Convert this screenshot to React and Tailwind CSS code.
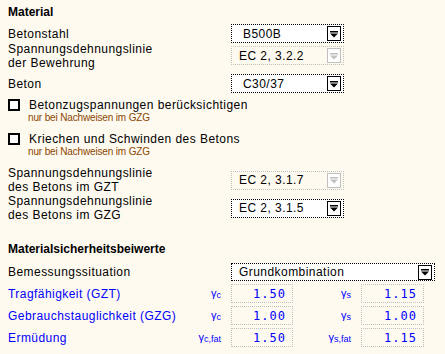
import React from 'react';

function Arrow({ disabled }) {
  return (
    <div
      className={
        disabled
          ? 'mr-[2px] flex h-[15px] w-[14px] items-center justify-center border border-[#c0c0c0] bg-white'
          : 'mr-[2px] flex h-[15px] w-[14px] items-center justify-center border border-black bg-white'
      }
    >
      <svg width="12" height="12" viewBox="0 0 12 12">
        <rect x="2" y="3" width="8" height="1.5" fill={disabled ? '#c0c0c0' : '#000'} />
        <polygon points="2,5.5 10,5.5 6,9.5" fill={disabled ? '#c0c0c0' : '#000'} />
      </svg>
    </div>
  );
}

function Select({ value, disabled, wide, pad }) {
  const base = 'flex items-center justify-between border border-dotted';
  const size = wide ? ' w-[204px] h-[18px]' : ' w-[113px] h-[19px]';
  const tone = disabled ? ' border-[#c0c0c0] bg-transparent' : ' border-black bg-white';
  return (
    <div className={base + size + tone}>
      <span className={pad ? 'pl-[11px] leading-[14px] text-black' : 'pl-[7px] leading-[14px] text-black'}>{value}</span>
      <Arrow disabled={disabled} />
    </div>
  );
}

function Gamma({ sub }) {
  return (
    <span className="text-[#0000ff] text-[11px] leading-[14px] tracking-normal">
      γ<span className="relative top-[1px] text-[9px]">{sub}</span>
    </span>
  );
}

function Num({ v, w }) {
  return (
    <div
      className={
        (w === 63 ? 'w-[63px]' : 'w-[62px]') +
        ' flex h-[19px] items-center justify-end border border-dotted border-[#c0c0c0] pr-[6px] font-["DejaVu_Sans_Mono",monospace] text-[12px] tracking-[1px] text-[#0000ff]'
      }
    >
      {v}
    </div>
  );
}

function DataRow({ label, g1, v1, g2, v2 }) {
  return (
    <div className="flex h-[19px] items-center">
      <div className="w-[180px] leading-[14px] text-[#0000ff]">{label}</div>
      <div className="w-[33px] text-right leading-[14px]">
        <Gamma sub={g1} />
      </div>
      <div className="ml-[10px]">
        <Num v={v1} w={62} />
      </div>
      <div className="w-[58px] text-right leading-[14px]">
        <Gamma sub={g2} />
      </div>
      <div className="ml-[10px]">
        <Num v={v2} w={63} />
      </div>
    </div>
  );
}

export default function App() {
  return (
    <div className="h-[354px] w-[445px] overflow-hidden bg-[#fffaf0] pl-[8px] font-['Liberation_Sans',sans-serif] text-[12px] tracking-[0.45px] text-black">
      <div className="pt-[5px] font-bold leading-[14px] tracking-normal">Material</div>

      <div className="mt-[5px] flex h-[19px] items-center">
        <div className="w-[223px] leading-[14px]">Betonstahl</div>
        <Select value="B500B" pad />
      </div>

      <div className="mt-[3px] flex h-[19px] items-center">
        <div className="w-[223px] leading-[14px]">
          Spannungsdehnungslinie
          <br />
          der Bewehrung
        </div>
        <Select value="EC 2, 3.2.2" disabled />
      </div>

      <div className="mt-[9px] flex h-[19px] items-center">
        <div className="w-[223px] leading-[14px]">Beton</div>
        <Select value="C30/37" pad />
      </div>

      <div className="mt-[5px]">
        <div className="flex h-[14px] items-center">
          <div className="h-[12px] w-[12px] border-2 border-black bg-white" />
          <div className="ml-[9px] leading-[14px]">Betonzugspannungen berücksichtigen</div>
        </div>
        <div className="pl-[20px] text-[10px] leading-[12px] tracking-[-0.15px] text-[#8a4600]">nur bei Nachweisen im GZG</div>
      </div>

      <div className="mt-[8px]">
        <div className="flex h-[14px] items-center">
          <div className="h-[12px] w-[12px] border-2 border-black bg-white" />
          <div className="ml-[9px] leading-[14px]">Kriechen und Schwinden des Betons</div>
        </div>
        <div className="pl-[20px] text-[10px] leading-[12px] tracking-[-0.15px] text-[#8a4600]">nur bei Nachweisen im GZG</div>
      </div>

      <div className="mt-[8px] flex h-[28px] items-center">
        <div className="w-[223px] leading-[14px]">
          Spannungsdehnungslinie
          <br />
          des Betons im GZT
        </div>
        <Select value="EC 2, 3.1.7" disabled />
      </div>

      <div className="flex h-[28px] items-center">
        <div className="w-[223px] leading-[14px]">
          Spannungsdehnungslinie
          <br />
          des Betons im GZG
        </div>
        <Select value="EC 2, 3.1.5" />
      </div>

      <div className="mt-[20px] font-bold leading-[14px] tracking-normal">Materialsicherheitsbeiwerte</div>

      <div className="mt-[7px] flex h-[18px] items-center">
        <div className="w-[223px] leading-[14px]">Bemessungssituation</div>
        <Select value="Grundkombination" wide />
      </div>

      <div className="mt-[3px] flex flex-col gap-[3px]">
        <DataRow label="Tragfähigkeit (GZT)" g1="c" v1="1.50" g2="s" v2="1.15" />
        <DataRow label="Gebrauchstauglichkeit (GZG)" g1="c" v1="1.00" g2="s" v2="1.00" />
        <DataRow label="Ermüdung" g1="c,fat" v1="1.50" g2="s,fat" v2="1.15" />
      </div>
    </div>
  );
}
